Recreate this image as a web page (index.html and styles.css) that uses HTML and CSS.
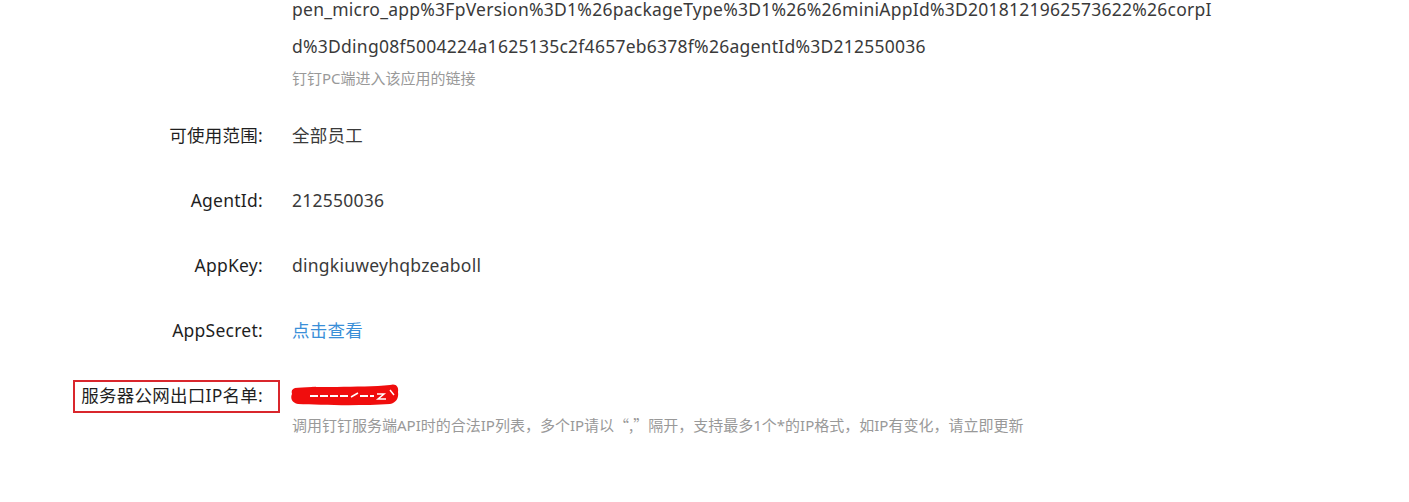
FILE: index.html
```html
<!DOCTYPE html>
<html lang="zh-CN">

<head>
    <meta charset="UTF-8">
    <meta name="viewport" content="width=device-width, initial-scale=1.0">
    <title>应用详情</title>
    <link rel="stylesheet" href="styles.css">
</head>

<body>
    <!-- App info form -->
    <main class="app-info">
        <div class="form-row">
            <div class="form-label"></div>
            <div class="form-value">
                <div class="url-text">pen_micro_app%3FpVersion%3D1%26packageType%3D1%26%26miniAppId%3D2018121962573622%26corpI<br>d%3Dding08f5004224a1625135c2f4657eb6378f%26agentId%3D212550036</div>
                <div class="form-hint">钉钉PC端进入该应用的链接</div>
            </div>
        </div>

        <div class="form-row">
            <div class="form-label">可使用范围:</div>
            <div class="form-value">全部员工</div>
        </div>

        <div class="form-row">
            <div class="form-label">AgentId:</div>
            <div class="form-value">212550036</div>
        </div>

        <div class="form-row">
            <div class="form-label">AppKey:</div>
            <div class="form-value">dingkiuweyhqbzeaboll</div>
        </div>

        <div class="form-row">
            <div class="form-label">AppSecret:</div>
            <div class="form-value"><a href="#" class="link">点击查看</a></div>
        </div>

        <div class="form-row">
            <div class="form-label"><span class="marked">服务器公网出口IP名单:</span></div>
            <div class="form-value">
                <!-- redacted value -->
                <svg class="scribble" width="110" height="24" viewBox="0 0 110 24">
                    <path d="M5 5 C 20 3, 70 5, 100 2 C 106 0, 109 4, 108 9 C 109 15, 106 20, 100 21 C 70 23, 30 22, 8 21 C 2 20, 0 15, 2 11 C 1 8, 2 6, 5 5 Z" fill="#f00d0d" />
                    <path d="M20 13 H 58 M70 13 H 84" stroke="#fff" stroke-width="2" stroke-dasharray="8 2" fill="none" />
                    <path d="M61 14 L 68 10 M87 11 L 94 11 L 88 16 L 96 16 M100 7 L 104 12" stroke="#fff" stroke-width="1.5" fill="none" />
                </svg>
                <div class="form-hint">调用钉钉服务端API时的合法IP列表，多个IP请以<span class="cjk">“,”</span>隔开，支持最多1个*的IP格式，如IP有变化，请立即更新</div>
            </div>
        </div>
    </main>
</body>

</html>
```

FILE: styles.css
```css
/* App detail form */
body {
    margin: 0;
    background: #fff;
    font-family: "Noto Sans", "Noto Sans CJK SC", sans-serif;
    color: #333;
}

.app-info {
    margin-top: -9px;
}

.form-row {
    display: flex;
    align-items: flex-start;
    margin-bottom: 28px;
    font-size: 17.5px;
    line-height: 37px;
    letter-spacing: 0.25px;
}

.form-label {
    width: 263px;
    flex-shrink: 0;
    text-align: right;
    color: #1f1f1f;
}

.form-value {
    margin-left: 29px;
    color: #3a3a3a;
}

.url-text {
    white-space: nowrap;
}

.form-hint {
    margin-top: 2px;
    font-size: 15px;
    line-height: 22px;
    letter-spacing: 0;
    color: #999;
}

.cjk {
    font-family: "Noto Sans CJK SC", sans-serif;
}

.link {
    color: #3a8fd8;
    text-decoration: none;
}

/* Red annotation box around a label */
.marked {
    position: relative;
    display: inline-block;
}

.marked::after {
    content: "";
    position: absolute;
    left: -8px;
    right: -17px;
    top: 3px;
    bottom: 1px;
    border: 2px solid #d9262c;
}

.scribble {
    display: block;
    margin: 6px 0 7px -2px;
}
```
